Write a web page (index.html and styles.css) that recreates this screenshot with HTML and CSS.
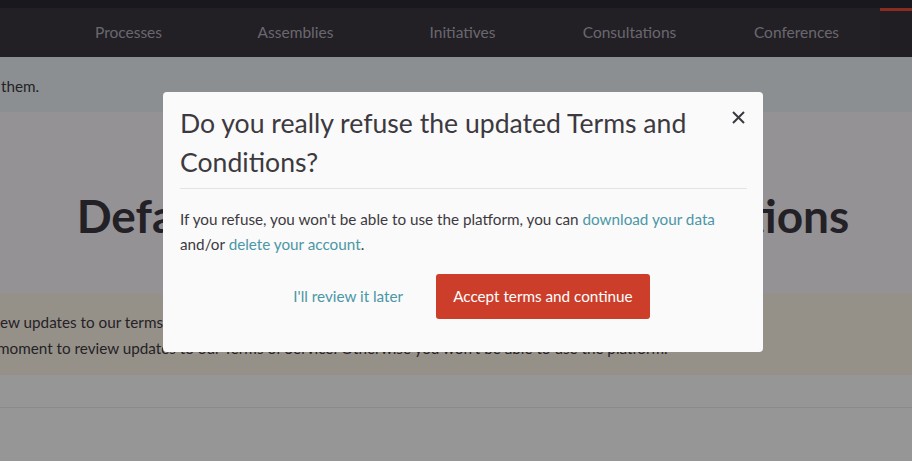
FILE: index.html
```html
<!DOCTYPE html>
<html lang="en">
<head>
<meta charset="utf-8">
<title>Terms</title>
<link rel="stylesheet" href="styles.css">
</head>
<body>
<div class="topbar"></div>
<nav class="nav">
  <a class="nav-item">Processes</a>
  <a class="nav-item">Assemblies</a>
  <a class="nav-item">Initiatives</a>
  <a class="nav-item">Consultations</a>
  <a class="nav-item">Conferences</a>
  <a class="nav-item nav-item--active"></a>
</nav>
<div class="callout"><span class="callout-text">them.</span></div>
<section class="hero">
  <h1 class="hero-title">Default Terms and Conditions</h1>
</section>
<section class="warning">
  <p class="warning-line warning-line--first">ew updates to our terms of service</p>
  <p class="warning-line warning-line--second">moment to review updates to our Terms of Service. Otherwise you won't be able to use the platform.</p>
</section>
<div class="page-rest"></div>

<div class="overlay">
  <div class="modal" role="dialog">
    <button class="modal-close" aria-label="Close">
      <svg width="13" height="13" viewBox="0 0 13 13"><path d="M1 1L12 12M12 1L1 12" stroke="#3b3840" stroke-width="2" fill="none"/></svg>
    </button>
    <h2 class="modal-title">Do you really refuse the updated Terms and Conditions?</h2>
    <div class="modal-divider"></div>
    <p class="modal-text">If you refuse, you won't be able to use the platform, you can <a class="link">download your data</a> and/or <a class="link">delete your account</a>.</p>
    <div class="modal-actions">
      <a class="btn-link">I'll review it later</a>
      <a class="btn-primary">Accept terms and continue</a>
    </div>
  </div>
</div>
</body>
</html>
```
FILE: styles.css
```css
* { box-sizing: border-box; }
body {
  margin: 0;
  font-family: Lato, "Open Sans", sans-serif;
  color: #3e3a45;
  background: #fff;
  overflow: hidden;
}
.topbar { height: 8px; background: #2c2a33; }
.nav {
  height: 49px;
  background: #3b3640;
  display: grid;
  grid-template-columns: repeat(6, 167px);
  padding-left: 45px;
}
.nav-item {
  display: block;
  text-align: center;
  line-height: 49px;
  font-size: 15.5px;
  color: #b4b0bc;
}
.nav-item--active {
  border-top: 3px solid #ea4b3a;
  background: #38343d;
}
.callout {
  height: 55px;
  background: #edf4f7;
  display: flex;
  align-items: center;
  padding-left: 1px;
  font-size: 15.25px;
  padding-top: 3px;
}
.hero {
  height: 181px;
  background: #fbf9fe;
  display: flex;
  align-items: center;
  justify-content: center;
  padding-left: 14px;
}
.hero-title {
  margin: 0;
  font-size: 46px;
  word-spacing: 55.7px;
  font-weight: 700;
  color: #3c3842;
  padding-top: 26px;
  white-space: nowrap;
}
.warning {
  height: 82px;
  background: #fff6e8;
  padding-top: 16px;
}
.warning-line { margin: 0; font-size: 15.25px; line-height: 26px; white-space: nowrap; }
.warning-line--second { margin-left: -3px; }
.page-rest {
  height: 33px;
  border-bottom: 1px solid #ececec;
}
.overlay {
  position: fixed;
  inset: 0;
  background: rgba(0, 0, 0, 0.41);
  padding: 92px 0 0 163px;
}
.modal {
  position: relative;
  width: 600px;
  background: #fafafa;
  border-radius: 4px;
  padding: 12px 16px 33px 17px;
}
.modal-close {
  position: absolute;
  top: 19px;
  right: 18px;
  border: 0;
  background: none;
  padding: 0;
  width: 13px;
  height: 13px;
  display: flex;
}
.modal-title {
  margin: 0;
  font-size: 26.6px;
  font-weight: 400;
  line-height: 39px;
  color: #3d3940;
  padding-right: 50px;
}
.modal-divider {
  border-top: 1px solid #e4e4e4;
  margin: 6px 0 18px;
}
.modal-text {
  margin: 0;
  font-size: 15.25px;
  line-height: 25px;
  color: #3d3940;
}
.link { color: #4a97a6; }
.modal-actions {
  display: flex;
  justify-content: center;
  gap: 17px;
  margin-top: 17px;
}
.btn-link {
  height: 45px;
  line-height: 45px;
  padding: 0 16px;
  color: #4a97a6;
  font-size: 15.25px;
}
.btn-primary {
  height: 45px;
  line-height: 45px;
  padding: 0 17px;
  background: #cc3e2a;
  color: #fff;
  border-radius: 3px;
  font-size: 15.25px;
}
```
